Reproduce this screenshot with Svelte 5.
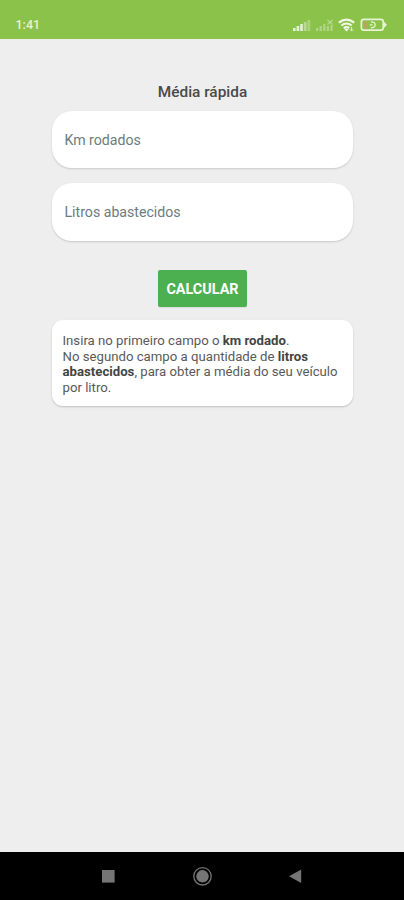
<script>
    let km = $state('');
    let litros = $state('');
    let media = $state(null);

    function calcular(){
        const distancia = parseFloat(km);
        const volume = parseFloat(litros);
        media = volume > 0 ? distancia / volume : null;
    }
</script>

<div class="screen">
    <header class="status">
        <span class="clock">1:41</span>
        <svg class="indicators" width="96" height="16" viewBox="0 0 96 16">
            <g fill="#e6f2d6">
                <rect x="1" y="11" width="2.6" height="3" />
                <rect x="4.6" y="9" width="2.6" height="5" />
                <rect x="8.2" y="7" width="2.6" height="7" />
                <rect x="11.8" y="5" width="2.8" height="9" opacity=".5" />
                <rect x="15.4" y="3" width="2.8" height="11" opacity=".35" />
            </g>
            <g fill="#e6f2d6" opacity=".42">
                <rect x="24" y="11" width="2.2" height="3" />
                <rect x="27.6" y="9" width="2.2" height="5" />
                <rect x="31.2" y="7" width="2.2" height="7" />
                <rect x="34.8" y="9" width="2.2" height="5" />
                <rect x="38.4" y="8" width="2.2" height="6" />
            </g>
            <path d="M35.5 3l5 4.5m0-4.5l-5 4.5" stroke="#e6f2d6" stroke-width="1.1" opacity=".5" />
            <g fill="none" stroke="#f1f8e8" stroke-width="2.1">
                <path d="M46.8 5.6q7.7-6 15.4 0" />
                <path d="M49.3 8.5q5.2-4 10.4 0" />
                <path d="M51.8 11.2q2.7-2 5.4 0" />
            </g>
            <path d="M52.4 12.3q2.1-1.2 4.2 0l-2.1 2.2z" fill="#f1f8e8" />
            <path d="M59.6 10v4m-1.6-1.6l1.6 1.6 1.6-1.6" fill="none" stroke="#e6f2d6" stroke-width="1" />
            <rect x="69.4" y="2.4" width="21.8" height="10.8" rx="2.4" fill="none" stroke="#e6f2d6" stroke-width="1.7" />
            <path d="M91.8 4.4l3.2 3.4-3.2 3.4z" fill="#e6f2d6" />
            <rect x="71.4" y="4.6" width="3.6" height="6.4" fill="#b9a755" />
            <path d="M78.8 4.8q4.4 0 4.4 3t-4.4 3M77.8 7.8h2.8" fill="none" stroke="#e6f2d6" stroke-width="1.3" />
        </svg>
    </header>

    <main>
        <h1>Média rápida</h1>
        <input class="field" type="text" inputmode="decimal" placeholder="Km rodados" bind:value={km} />
        <input class="field" type="text" inputmode="decimal" placeholder="Litros abastecidos" bind:value={litros} />
        <button onclick={calcular}>CALCULAR</button>
        <div class="info">
            {#if media === null}
                Insira no primeiro campo o <b>km rodado</b>.<br />
                No segundo campo a quantidade de <b>litros</b><br />
                <b>abastecidos</b>, para obter a média do seu veículo por litro.
            {:else}
                Média: <b>{media.toFixed(2)} km/l</b>
            {/if}
        </div>
    </main>

    <nav>
        <svg width="20" height="20" viewBox="0 0 20 20"><rect x="4" y="4" width="12.6" height="12.6" fill="#757575" /></svg>
        <svg width="20" height="20" viewBox="0 0 20 20">
            <circle cx="10.5" cy="10.3" r="8.7" fill="none" stroke="#757575" stroke-width="1.3" />
            <circle cx="10.5" cy="10.3" r="6.2" fill="#757575" />
        </svg>
        <svg width="20" height="20" viewBox="0 0 20 20"><path d="M3 10.2L15.2 3.6v13.4z" fill="#757575" /></svg>
    </nav>
</div>

<style>
    :global(body){
        background: #eee;
    }
    .screen{
        display: flex;
        flex-direction: column;
        height: 900px;
        background: #eee;
        font-family: Roboto, "Liberation Sans", sans-serif;
    }
    .status{
        display: flex;
        justify-content: space-between;
        align-items: flex-start;
        box-sizing: border-box;
        height: 39px;
        padding: 17px 16px 0 15.5px;
        background: #8bc34a;
    }
    .clock{
        color: #e6f2d6;
        font-size: 12.5px;
        font-weight: 500;
        line-height: 16px;
    }
    main{
        display: flex;
        flex: 1;
        flex-direction: column;
        align-items: center;
        padding: 43px 51px 0 52px;
    }
    h1{
        margin: 0 0 9px;
        color: #4a4a4a;
        font-size: 15.4px;
        font-weight: 500;
        line-height: 20px;
    }
    .field{
        box-sizing: border-box;
        width: 100%;
        height: 57.4px;
        margin-bottom: 15px;
        padding: 0 12.5px;
        border: 0;
        border-radius: 20px;
        outline: none;
        background: #fff;
        box-shadow: 0 1px 2px rgba(0, 0, 0, .16);
        color: #444;
        font: 14.15px Roboto, "Liberation Sans", sans-serif;
    }
    .field::placeholder{
        color: #6b7c80;
        opacity: 1;
    }
    button{
        width: 89px;
        height: 37.2px;
        margin: 14px 0 13px;
        padding: 2px 0 0;
        border: 0;
        border-radius: 2px;
        background: #4caf50;
        box-shadow: 0 1px 1px rgba(0, 0, 0, .08);
        color: #fff;
        font: 700 14.4px Roboto, "Liberation Sans", sans-serif;
    }
    .info{
        box-sizing: border-box;
        width: 100%;
        height: 86px;
        padding: 13px 10px 9px 10.5px;
        border-radius: 11px;
        background: #fff;
        box-shadow: 0 1px 2px rgba(0, 0, 0, .2);
        color: #5a5a5a;
        font-size: 13.2px;
        line-height: 15.75px;
    }
    b{
        color: #444;
        font-weight: 700;
    }
    nav{
        display: flex;
        justify-content: center;
        align-items: center;
        gap: 74px;
        height: 48px;
        background: #000;
    }
</style>
